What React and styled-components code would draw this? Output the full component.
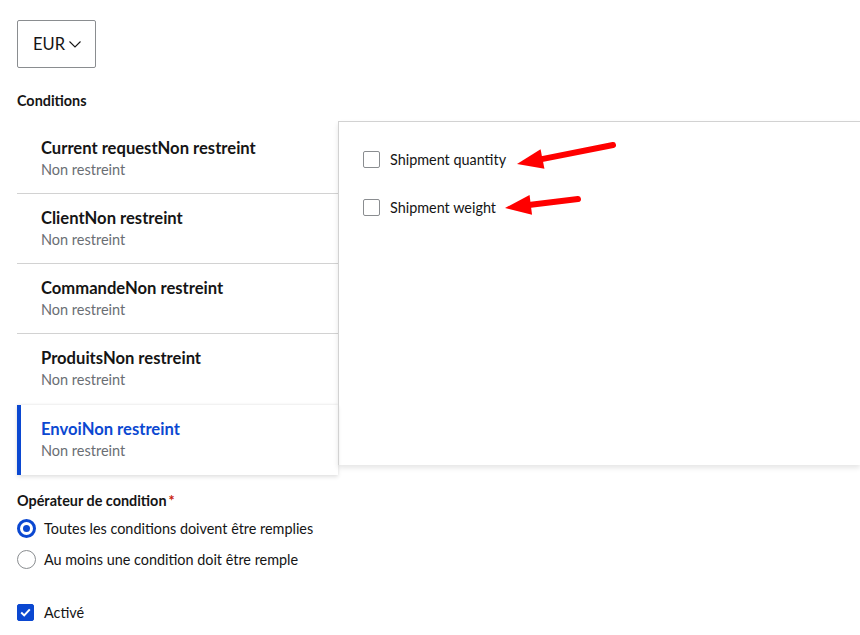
import React from "react";
import styled, { createGlobalStyle } from "styled-components";

const Global = createGlobalStyle`
  body {
    margin: 0;
    background: #fff;
    font-family: Lato, "Noto Sans", sans-serif;
    color: #151515;
  }
`;

const Page = styled.div`
  position: relative;
  width: 860px;
  height: 635px;
  overflow: hidden;
  padding: 20px 0 0 17px;
  box-sizing: border-box;
`;

const Select = styled.button`
  display: flex;
  align-items: center;
  gap: 3px;
  width: 79px;
  height: 48px;
  padding: 0 0 0 15px;
  border: 1px solid #8a8d90;
  border-radius: 2px;
  background: #fff;
  font-family: inherit;
  font-size: 16.5px;
  color: #151515;
  box-sizing: border-box;
`;

const Label = styled.div`
  font-size: 14.4px;
  font-weight: 700;
  margin-top: ${(p) => p.$top || 0}px;
  line-height: 20px;
`;

const Required = styled.span`
  color: #c9190b;
  margin-left: 2px;
`;

const Conditions = styled.div`
  display: flex;
  margin-top: 11px;
`;

const Tabs = styled.div`
  width: 321px;
  flex-shrink: 0;
  display: flex;
  flex-direction: column;
  padding-top: 2px;
`;

const Tab = styled.div`
  height: 70px;
  box-sizing: border-box;
  padding: 13px 0 0 24px;
  border-bottom: ${(p) => (p.$last ? "none" : "1px solid #d2d2d2")};
  ${(p) =>
    p.$active &&
    `
    border-left: 4px solid #0b48d1;
    padding-left: 20px;
    box-shadow: 0 2px 4px rgba(3, 3, 3, 0.12), 0 -1px 2px rgba(3,3,3,0.06);
    margin-top: 1px;
  `}
`;

const TabTitle = styled.div`
  font-size: 16.6px;
  font-weight: 700;
  line-height: 22px;
  color: ${(p) => (p.$active ? "#0b48d1" : "#151515")};
`;

const TabSub = styled.div`
  font-size: 14.5px;
  line-height: 20px;
  color: #6a6e73;
  margin-top: 1px;
`;

const Panel = styled.div`
  flex: 1;
  height: 344px;
  border-top: 1px solid #d2d2d2;
  border-left: 1px solid #d2d2d2;
  box-shadow: 0 3px 5px rgba(3, 3, 3, 0.1);
  padding: 29px 0 0 24px;
  box-sizing: border-box;
  margin-top: -1px;
  display: flex;
  flex-direction: column;
  gap: 31px;
`;

const Check = styled.label`
  display: flex;
  align-items: center;
  gap: 10px;
  font-size: 14.4px;
  line-height: 17px;
  color: #151515;
`;

const Box = styled.span`
  width: 17px;
  height: 17px;
  box-sizing: border-box;
  border: 1px solid #8a8d90;
  border-radius: 2px;
  background: ${(p) => (p.$checked ? "#0b48d1" : "#fff")};
  border-color: ${(p) => (p.$checked ? "#0b48d1" : "#8a8d90")};
  display: flex;
  align-items: center;
  justify-content: center;
`;

const Radios = styled.div`
  display: flex;
  flex-direction: column;
  gap: 12px;
  margin-top: 8px;
`;

const Radio = styled.label`
  display: flex;
  align-items: center;
  gap: 8px;
  font-size: 14.4px;
  line-height: 19px;
  color: #151515;
`;

const Circle = styled.span`
  width: 19px;
  height: 19px;
  box-sizing: border-box;
  border-radius: 50%;
  border: ${(p) => (p.$checked ? "3px solid #0b48d1" : "1px solid #8a8d90")};
  display: flex;
  align-items: center;
  justify-content: center;
  &::after {
    content: "";
    display: ${(p) => (p.$checked ? "block" : "none")};
    width: 7px;
    height: 7px;
    border-radius: 50%;
    background: #0b48d1;
  }
`;

const Enabled = styled.div`
  margin-top: 35px;
`;

const Arrows = styled.svg`
  position: absolute;
  left: 0;
  top: 0;
  pointer-events: none;
`;

const tabs = ["Current request", "Client", "Commande", "Produits", "Envoi"];

const Arrow = ({ x1, y1, x2, y2 }) => {
  const dx = x2 - x1;
  const dy = y2 - y1;
  const len = Math.hypot(dx, dy);
  const ux = dx / len;
  const uy = dy / len;
  const headLen = 26;
  const bx = x2 - ux * headLen;
  const by = y2 - uy * headLen;
  const px = -uy * 10;
  const py = ux * 10;
  return (
    <g fill="#ff0000" stroke="#ff0000">
      <line x1={x1} y1={y1} x2={bx + ux * 2} y2={by + uy * 2} strokeWidth="6" strokeLinecap="round" />
      <polygon points={`${x2},${y2} ${bx + px},${by + py} ${bx - px},${by - py}`} stroke="none" />
    </g>
  );
};

export default function App() {
  return (
    <Page>
      <Global />
      <Select>
        EUR
        <svg width="14" height="14" viewBox="0 0 14 14">
          <path d="M1.5 4.5 L7 10 L12.5 4.5" fill="none" stroke="#151515" strokeWidth="1.1" />
        </svg>
      </Select>
      <Label $top={23}>Conditions</Label>
      <Conditions>
        <Tabs>
          {tabs.map((t, i) => {
            const active = i === tabs.length - 1;
            return (
              <Tab key={t} $active={active} $last={i >= tabs.length - 2}>
                <TabTitle $active={active}>{t}Non restreint</TabTitle>
                <TabSub>Non restreint</TabSub>
              </Tab>
            );
          })}
        </Tabs>
        <Panel>
          <Check>
            <Box />
            Shipment quantity
          </Check>
          <Check>
            <Box />
            Shipment weight
          </Check>
        </Panel>
      </Conditions>
      <Label $top={16}>
        Opérateur de condition<Required>*</Required>
      </Label>
      <Radios>
        <Radio>
          <Circle $checked />
          Toutes les conditions doivent être remplies
        </Radio>
        <Radio>
          <Circle />
          Au moins une condition doit être remple
        </Radio>
      </Radios>
      <Enabled>
        <Check>
          <Box $checked>
            <svg width="11" height="9" viewBox="0 0 11 9">
              <path d="M1.2 4.6 L4.2 7.4 L9.8 1.4" fill="none" stroke="#fff" strokeWidth="2" />
            </svg>
          </Box>
          Activé
        </Check>
      </Enabled>
      <Arrows width="860" height="635">
        <Arrow x1={613} y1={145} x2={517} y2={164} />
        <Arrow x1={578} y1={199} x2={505} y2={208} />
      </Arrows>
    </Page>
  );
}
